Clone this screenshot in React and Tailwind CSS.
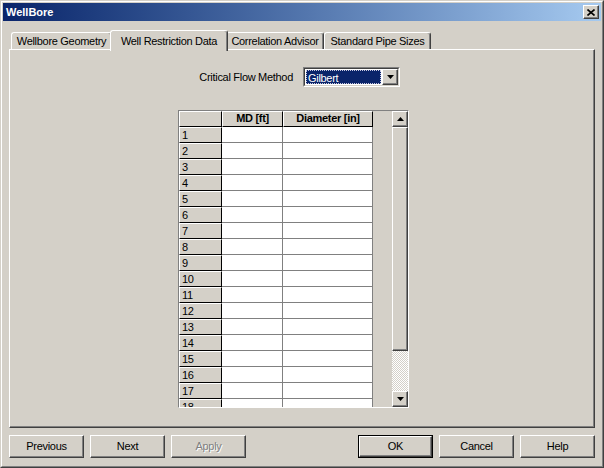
import React from "react"

const raised =
  "bg-[#d4d0c8] border border-t-white border-l-white border-r-[#404040] border-b-[#404040] shadow-[inset_-1px_-1px_0_#808080]"

const Btn = ({ label, disabled, isDefault }) => (
  <div className={isDefault ? "border border-black" : ""}>
    <div
      className={`${raised} ${isDefault ? "w-[73px] h-[21px]" : "w-[75px] h-[23px]"} flex items-center justify-center`}
    >
      <span
        className={
          disabled ? "text-[#808080] [text-shadow:1px_1px_0_#fff]" : "text-black"
        }
      >
        {label}
      </span>
    </div>
  </div>
)

const Arrow = ({ down }) => (
  <svg width="7" height="4" viewBox="0 0 7 4">
    <path d={down ? "M0 0h7L3.5 4z" : "M0 4h7L3.5 0z"} fill="#000" />
  </svg>
)

const tab =
  "h-[17px] border border-b-0 border-t-white border-l-white border-r-[#404040] rounded-t-[3px] shadow-[inset_-1px_0_0_#808080] flex items-center justify-center"

const App = () => {
  const rows = Array.from({ length: 18 }, (_, i) => i + 1)

  return (
    <div
      className="w-[604px] h-[468px] bg-[#d4d0c8] border border-t-[#d4d0c8] border-l-[#d4d0c8] border-r-[#404040] border-b-[#404040] text-[11px] text-black tracking-[-0.3px]"
      style={{ fontFamily: '"Liberation Sans", Arial, sans-serif' }}
    >
      <div className="h-full border border-t-white border-l-white border-r-[#808080] border-b-[#808080] p-[1px] flex flex-col">
        {/* Title bar */}
        <div className="h-[18px] bg-linear-to-r from-[#0a246a] to-[#a6caf0] flex items-center justify-between pl-[3px] pr-[2px]">
          <span className="text-white font-bold tracking-normal">WellBore</span>
          <div className={`${raised} w-[16px] h-[14px] flex items-center justify-center`}>
            <svg width="8" height="7" viewBox="0 0 8 7">
              <path d="M0.5 0.5l7 6M7.5 0.5l-7 6" stroke="#000" strokeWidth="1.6" />
            </svg>
          </div>
        </div>

        <div className="px-[6px] flex flex-col">
          {/* Tabs */}
          <div className="mt-[9px] h-[19px] flex items-end pl-[2px]">
            <div className={`${tab} w-[101px]`}>Wellbore Geometry</div>
            <div className="relative z-10 -mx-[2px] w-[118px] h-[21px] -mb-[2px] bg-[#d4d0c8] border border-b-0 border-t-white border-l-white border-r-[#404040] rounded-t-[3px] shadow-[inset_-1px_0_0_#808080] flex items-start justify-center pt-[2px]">
              Well Restriction Data
            </div>
            <div className={`${tab} w-[98px]`}>Correlation Advisor</div>
            <div className={`${tab} w-[107px]`}>Standard Pipe Sizes</div>
          </div>

          {/* Panel */}
          <div className="h-[379px] border border-t-white border-l-white border-r-[#404040] border-b-[#404040] shadow-[inset_-1px_-1px_0_#808080] flex flex-col">
            <div className="mt-[17px] flex items-center">
              <div className="w-[283px] text-right">Critical Flow Method</div>
              <div className="ml-[10px] w-[97px] h-[20px] border border-t-[#808080] border-l-[#808080] border-r-white border-b-white">
                <div className="h-full border border-t-[#404040] border-l-[#404040] border-r-[#d4d0c8] border-b-[#d4d0c8] bg-white flex">
                  <div className="flex-1 m-[1px] bg-[#0a246a] border border-dotted border-[#c8c8e0] text-white leading-[14px] pl-[1px]">
                    Gilbert
                  </div>
                  <div className={`${raised} w-[16px] flex items-center justify-center`}>
                    <Arrow down />
                  </div>
                </div>
              </div>
            </div>

            {/* Grid */}
            <div className="ml-[168px] mt-[23px] w-[231px] h-[298px] border border-t-[#808080] border-l-[#808080] border-r-white border-b-white flex">
              <div className="w-[194px] h-full overflow-hidden flex flex-col">
                <div className="flex shrink-0">
                  <div className="w-[43px] h-[16px] bg-[#d4d0c8] border border-t-white border-l-white border-r-black border-b-black"></div>
                  <div className="w-[61px] h-[16px] bg-[#d4d0c8] border border-t-white border-l-white border-r-black border-b-black font-bold text-center leading-[13px]">
                    MD [ft]
                  </div>
                  <div className="w-[90px] h-[16px] bg-[#d4d0c8] border border-t-white border-l-white border-r-black border-b-black font-bold text-center leading-[13px]">
                    Diameter [in]
                  </div>
                </div>
                {rows.map((n) => (
                  <div key={n} className="flex shrink-0">
                    <div className="w-[43px] h-[16px] bg-[#d4d0c8] border border-t-white border-l-white border-r-black border-b-black pl-[2px] leading-[14px]">
                      {n}
                    </div>
                    <div className="w-[61px] h-[16px] bg-white border-r border-b border-[#808080]"></div>
                    <div className="w-[90px] h-[16px] bg-white border-r border-b border-[#808080]"></div>
                  </div>
                ))}
              </div>
              <div className="w-[19px]"></div>
              {/* Scrollbar */}
              <div className="w-[16px] h-full flex flex-col">
                <div className={`${raised} h-[16px] flex items-center justify-center`}>
                  <Arrow />
                </div>
                <div className={`${raised} h-[224px]`}></div>
                <div className="flex-1 bg-[repeating-conic-gradient(#d4d0c8_0_25%,#ffffff_0_50%)] [background-size:2px_2px]"></div>
                <div className={`${raised} h-[16px] flex items-center justify-center`}>
                  <Arrow down />
                </div>
              </div>
            </div>
          </div>

          {/* Buttons */}
          <div className="mt-[7px] flex justify-between">
            <div className="flex gap-[6px]">
              <Btn label="Previous" />
              <Btn label="Next" />
              <Btn label="Apply" disabled />
            </div>
            <div className="flex gap-[6px]">
              <Btn label="OK" isDefault />
              <Btn label="Cancel" />
              <Btn label="Help" />
            </div>
          </div>
        </div>
      </div>
    </div>
  )
}

export default App
